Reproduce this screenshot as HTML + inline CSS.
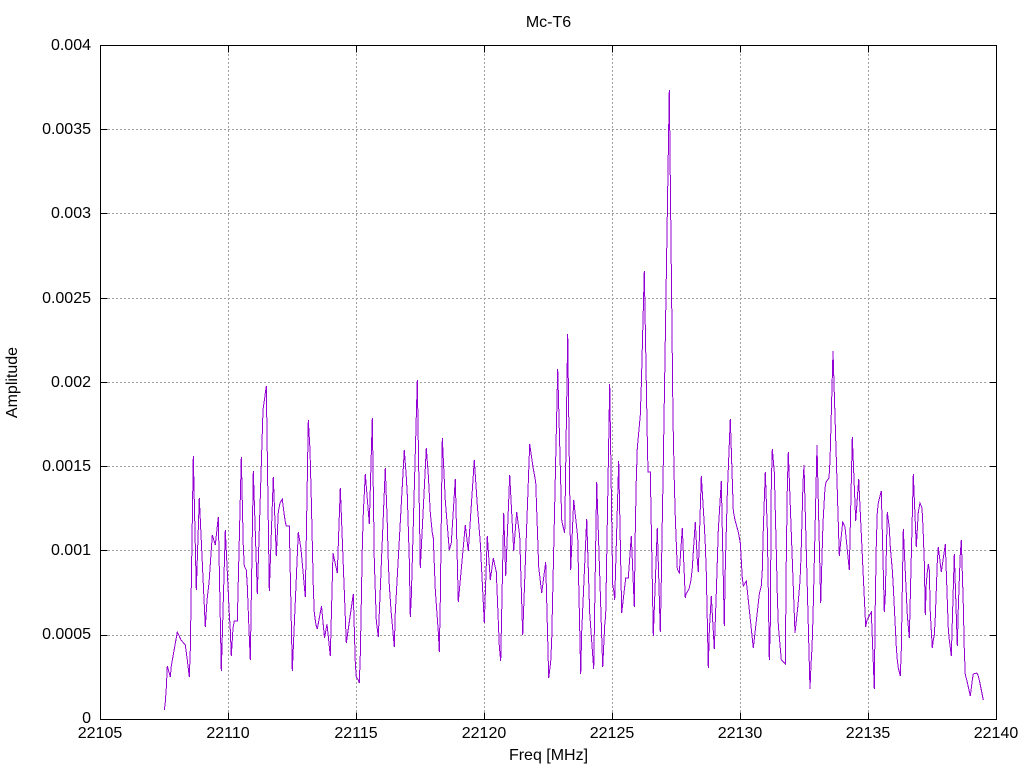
<!DOCTYPE html>
<html>
<head>
<meta charset="utf-8">
<title>Mc-T6</title>
<style>
html,body{margin:0;padding:0;background:#fff;width:1024px;height:768px;overflow:hidden}
svg{display:block}
text{font-family:"Liberation Sans",sans-serif;font-size:16px;fill:#000}
</style>
</head>
<body>
<svg width="1024" height="768" viewBox="0 0 1024 768" xmlns="http://www.w3.org/2000/svg">
<rect width="1024" height="768" fill="#fff"/>
<g stroke="#a0a0a0" stroke-width="1" stroke-dasharray="2 2" fill="none" shape-rendering="crispEdges">
<path d="M108 635.5H988M108 550.5H988M108 466.5H988M108 382.5H988M108 298.5H988M108 213.5H988M108 129.5H988"/>
<path d="M228.5 712V52M356.5 712V52M484.5 712V52M612.5 712V52M740.5 712V52M868.5 712V52"/>
</g>
<g stroke="#000" stroke-width="1" fill="none" shape-rendering="crispEdges">
<path d="M100.5 635.5h7M100.5 550.5h7M100.5 466.5h7M100.5 382.5h7M100.5 298.5h7M100.5 213.5h7M100.5 129.5h7"/>
<path d="M996.5 635.5h-7M996.5 550.5h-7M996.5 466.5h-7M996.5 382.5h-7M996.5 298.5h-7M996.5 213.5h-7M996.5 129.5h-7"/>
<path d="M228.5 719.5v-7M356.5 719.5v-7M484.5 719.5v-7M612.5 719.5v-7M740.5 719.5v-7M868.5 719.5v-7"/>
<path d="M228.5 45.5v7M356.5 45.5v7M484.5 45.5v7M612.5 45.5v7M740.5 45.5v7M868.5 45.5v7"/>
</g>
<polyline fill="none" stroke="#9400d3" stroke-width="1" shape-rendering="crispEdges" points="164.3,710 165.3,702 166.3,688 167.3,666 170.3,677 171.3,666 177.3,632 178.3,634 181,640 185.3,645 187.3,660 189.3,677 190.3,650 193.3,456 196.3,590 199.3,498 205.3,627 207,600 209,583 212.3,535 215.3,545 218.3,517 221.3,671 225.3,530 228.3,593 229.3,614 230.3,630 231.3,656 233,628 234.3,621 237.3,621 241.3,457 243.3,547 244.3,566 246.3,570 247.3,586 249,630 250.3,660 253.3,471 257.3,594 263,410 264,403 266.3,386 269.3,591 273.3,477 276.3,556 278.3,512 280,503 282.3,499 284,513 285.3,522 286.3,526 289.3,526 292.3,671 298.3,532 301,549 305.3,597 308.3,420 310,450 311.3,499 313.3,587 314.3,613 316,625 317.3,629 321.5,606 324.5,638 327,624 330.3,656 333,553 337.3,573 340.3,488 346.3,643 353.3,594 355.3,663 356.3,677 358.3,680 359.3,683 360.3,655 361.3,602 362.3,547 363.3,513 365.3,474 369.3,524 372.3,418 374.3,561 376.3,621 378.3,637 385.3,468 387.3,524 388.3,561 389.3,585 391,610 394.3,647 395.3,612 404.3,450 406.3,477 407.3,495 409.3,560 410.3,617 411.3,597 417.3,380 420.3,568 426.3,448 428.3,475 430.3,513 432.3,533 433.3,538 435.3,590 438.3,632 439.3,652 440.3,600 441.3,520 442.3,438 445.3,501 449.3,550 451.3,543 455.3,479 458.3,602 465.3,525 468.3,551 474.3,460 477.3,505 480.3,543 484.3,623 487.3,536 490.3,580 493.3,558 496.3,572 499.3,646 500.7,661 503.7,513 505.7,576 509.7,475 513.7,551 516.7,512 519.7,536 522.7,635 529.7,444 533,467 535.7,482 538.7,567 541.7,593 545.7,562 548.7,678 550.7,662 551.7,640 557.7,369 561.7,520 562.7,525 564.7,533 567.7,334 570.7,570 573.7,500 577.7,537 580.7,674 581.7,632 586.7,519 589.7,613 593.7,669 596.7,482 602.7,667 604.7,625 605.7,615 609.7,384 612.7,585 613.7,590 614.7,600 618.7,461 621.7,613 625.7,578 628.3,578 631.3,536 634.3,607 635.3,529 636.3,479 637.3,448 640.3,415 641.3,386 644.3,271 647.3,439 648,472 650.3,472 653.3,636 657.3,528 660.3,632 661.3,580 662.3,520 663.3,463 669.3,90 673,419 674.3,482 675.3,517 677.3,569 679.3,573 682.3,528 685.3,598 686,594 689,589 691,580 692.3,568 693.3,552 695.3,522 697.3,560 698.3,572 701.3,476 704.3,525 705.3,545 706.3,573 708.3,668 709.3,631 711.3,596 714.3,649 716.3,593 718.3,530 721.3,481 724.3,626 725.3,567 727.3,494 730.3,419 733.3,511 735,520 738.3,532 740.3,543 742.3,578 743.3,586 746.3,581 753.3,648 759.3,594 761.3,586 762.3,570 763.3,529 765.3,472 767.3,529 768.3,590 769.3,660 770.3,625 771.3,484 772.3,449 774.3,472 776.3,551 777.3,595 778.3,625 781.3,660 785.3,664 786.3,557 787.3,488 788.3,452 795,633 798,605 800,581 801,557 803,483 804,465 810,689 811,665 812,648 813,617 817,445 820.7,603 822,557 823,523 824,505 825,488 826,482 829,478 830,461 833,351 839.3,556 842.7,522 845,527 849.3,570 852.3,437 855.7,521 858.7,479 865.7,627 867,620 871.3,612 874.3,689 875.3,602 876.3,544 877.3,512 878.3,503 881.3,491 884.3,612 885.3,595 887.3,512 889.3,528 890.3,547 892.3,570 893.3,587 896.3,647 897.3,660 898.3,668 900.3,676 901.3,650 903.3,529 907.3,615 909.3,638 913.3,474 916.3,547 918.3,512 920,503 922,508 923,527 924.3,562 925.3,615 926.3,583 927.3,572 928.3,564 929.3,570 930.3,613 932.3,648 933.3,640 934.3,635 935.3,617 936.3,590 937.3,562 938.3,547 941.3,572 945.3,544 948.3,629 949.3,640 951.3,656 954.3,554 957.3,646 958.3,608 959.3,580 960.3,554 961.3,540 963.3,605 964.3,650 965.3,675 966.3,678 970.3,696 971.3,688 972.3,680 973.3,674 976.7,673 978,675 979.3,680 981.3,690 983.3,700"/>
<rect x="100.5" y="45.5" width="896" height="674" fill="none" stroke="#000" stroke-width="1" shape-rendering="crispEdges"/>
<g text-anchor="end">
<text x="91" y="723">0</text>
<text x="91" y="639">0.0005</text>
<text x="91" y="555">0.001</text>
<text x="91" y="471">0.0015</text>
<text x="91" y="387">0.002</text>
<text x="91" y="303">0.0025</text>
<text x="91" y="218">0.003</text>
<text x="91" y="134">0.0035</text>
<text x="91" y="50">0.004</text>
</g>
<g text-anchor="middle">
<text x="100" y="738">22105</text>
<text x="228" y="738">22110</text>
<text x="356" y="738">22115</text>
<text x="484" y="738">22120</text>
<text x="612" y="738">22125</text>
<text x="740" y="738">22130</text>
<text x="868" y="738">22135</text>
<text x="996" y="738">22140</text>
<text x="548.5" y="760">Freq [MHz]</text>
<text x="548.5" y="27">Mc-T6</text>
<text transform="translate(17,382.5) rotate(-90)">Amplitude</text>
</g>
</svg>
</body>
</html>
